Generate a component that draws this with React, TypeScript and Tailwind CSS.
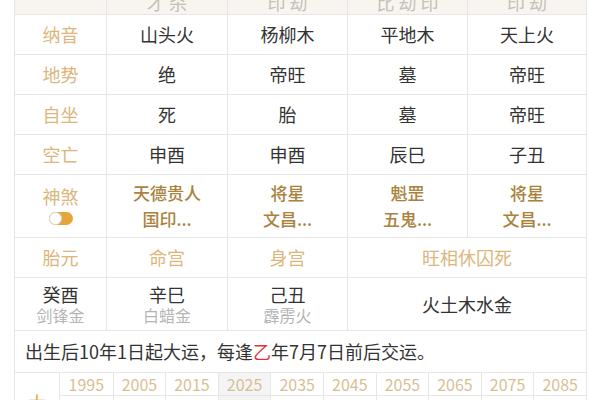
import React from "react";

const B = "border-[#e6e6e6]";

function Cell({ children, className = "" }: { children?: React.ReactNode; className?: string }) {
  return (
    <div className={`flex flex-col items-center justify-center border-l border-[#e6e6e6] ${className}`}>
      {children}
    </div>
  );
}

function Label({ children }: { children: React.ReactNode }) {
  return <div className="flex items-center justify-center text-[18px] text-[#dcb67c]">{children}</div>;
}

const gridCols = "grid grid-cols-[91px_121px_120px_120px_119px]";

export default function App() {
  const simpleRows: [string, string[]][] = [
    ["纳音", ["山头火", "杨柳木", "平地木", "天上火"]],
    ["地势", ["绝", "帝旺", "墓", "帝旺"]],
    ["自坐", ["死", "胎", "墓", "帝旺"]],
    ["空亡", ["申酉", "申酉", "辰巳", "子丑"]],
  ];
  const shensha: [string, string][] = [
    ["天德贵人", "国印..."],
    ["将星", "文昌..."],
    ["魁罡", "五鬼..."],
    ["将星", "文昌..."],
  ];
  const years = ["1995", "2005", "2015", "2025", "2035", "2045", "2055", "2065", "2075", "2085"];

  return (
    <div className="w-[600px] h-[400px] overflow-hidden bg-white font-['Noto_Sans_CJK_SC','Noto_Sans',sans-serif] text-[#333]">
      <div className={`ml-[14px] w-[573px] -mt-[10px] border-l border-r ${B}`}>
        {/* header */}
        <div className={`${gridCols} h-[25px] border-b ${B} bg-[#f8f5f0] text-[18px] text-[#c4c0ba]`}>
          <div />
          <Cell className="leading-none">才 杀</Cell>
          <Cell className="leading-none">印 劫</Cell>
          <Cell className="leading-none">比 劫 印</Cell>
          <Cell className="leading-none">印 劫</Cell>
        </div>
        {simpleRows.map(([label, vals]) => (
          <div key={label} className={`${gridCols} h-[40px] border-b ${B} text-[18px]`}>
            <Label>{label}</Label>
            {vals.map((v, i) => (
              <Cell key={i}>{v}</Cell>
            ))}
          </div>
        ))}
        {/* 神煞 */}
        <div className={`${gridCols} h-[63px] border-b ${B}`}>
          <div className="flex flex-col items-center justify-center pb-[4px]">
            <div className="text-[18px] leading-[24px] text-[#dcb67c]">神煞</div>
            <div className="mt-[4px] relative w-[24px] h-[13px] rounded-full bg-[#e6a53c]">
              <div className="absolute left-0 top-0 w-[13px] h-[13px] rounded-full bg-white border border-[#d9d9d9]" />
            </div>
          </div>
          {shensha.map(([a, b], i) => (
            <Cell key={i} className="text-[17px] leading-[26px] text-[#a9823d] font-medium">
              <div>{a}</div>
              <div>{b}</div>
            </Cell>
          ))}
        </div>
        {/* 胎元 */}
        <div className={`grid grid-cols-[91px_121px_120px_239px] h-[40px] border-b ${B} text-[18px] text-[#dcb67c]`}>
          <Label>胎元</Label>
          <Cell>命宫</Cell>
          <Cell>身宫</Cell>
          <Cell>旺相休囚死</Cell>
        </div>
        {/* pillars */}
        <div className={`grid grid-cols-[91px_121px_120px_239px] h-[53px] border-b ${B}`}>
          {[
            ["癸酉", "剑锋金"],
            ["辛巳", "白蜡金"],
            ["己丑", "霹雳火"],
          ].map(([a, b], i) => (
            <div
              key={i}
              className={`flex flex-col items-center justify-center ${i > 0 ? `border-l ${B}` : ""}`}
            >
              <div className="text-[18px] leading-[21px]">{a}</div>
              <div className="text-[16px] leading-[20px] text-[#b5b5b5]">{b}</div>
            </div>
          ))}
          <Cell className="text-[18px]">火土木水金</Cell>
        </div>
        {/* text line */}
        <div className={`h-[42px] border-b ${B} flex items-center pl-[10px] text-[18px]`}>
          出生后10年1日起大运，每逢<span className="text-[#e0323a]">乙</span>年7月7日前后交运。
        </div>
        {/* years */}
        <div className="flex h-[60px]">
          <div className={`w-[45px] border-r ${B} flex justify-center pt-[20px] text-[18px] text-[#e8a33a] leading-none`}>
            大
          </div>
          <div className="flex-1 flex flex-col">
            <div className={`grid grid-cols-10 h-[23px] border-b ${B} text-[16px] text-[#d8bf93]`}>
              {years.map((y, i) => (
                <div
                  key={y}
                  className={`flex items-center justify-center leading-none ${i > 0 ? `border-l ${B}` : ""} ${
                    y === "2025" ? "bg-[#f4f4f4]" : ""
                  }`}
                >
                  {y}
                </div>
              ))}
            </div>
            <div className="grid grid-cols-10 flex-1">
              {years.map((y, i) => (
                <div
                  key={y}
                  className={`${i > 0 ? `border-l ${B}` : ""} ${y === "2025" ? "bg-[#f4f4f4]" : ""}`}
                />
              ))}
            </div>
          </div>
        </div>
      </div>
    </div>
  );
}
